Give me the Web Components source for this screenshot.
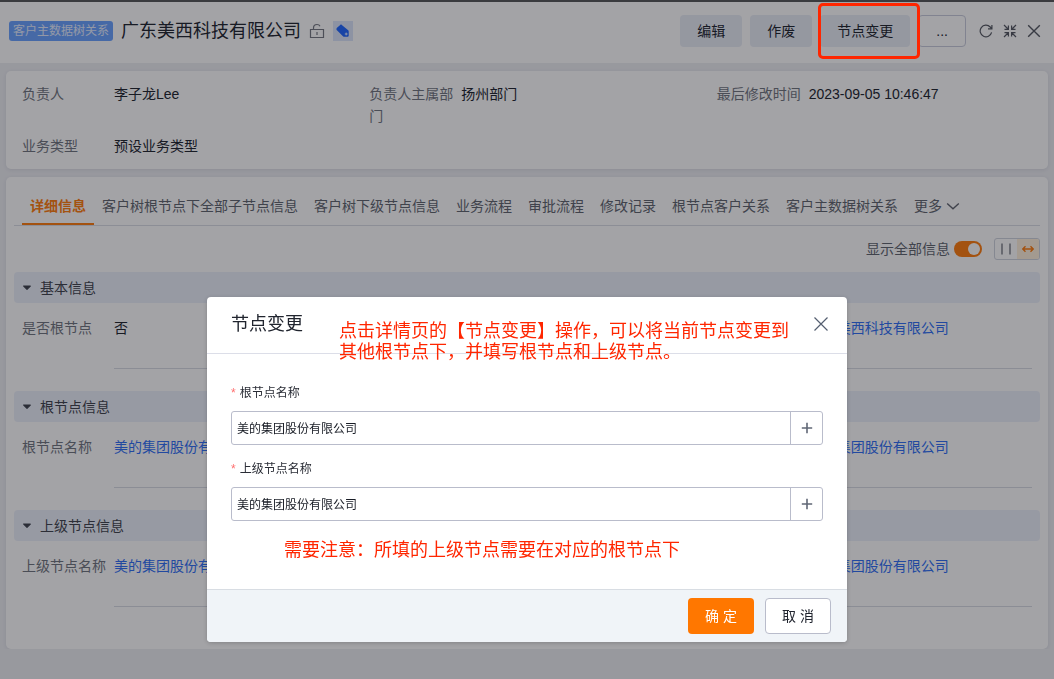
<!DOCTYPE html>
<html lang="zh-CN">
<head>
<meta charset="utf-8">
<meta name="viewport" content="width=device-width, initial-scale=1">
<title>广东美西科技有限公司</title>
<style>
  body {
    margin: 0;
    font: 14px/22px "Liberation Sans", "Noto Sans CJK SC", sans-serif;
    color: #20242e;
    background: #eeeff3;
  }
</style>
</head>
<body>
<crm-page></crm-page>

<script>
class CustomElement extends HTMLElement {
  constructor() {
    super()
    this.attachShadow({mode: 'open'})
  }

  attr(name) {
    return this.getAttribute(name) || ''
  }

  connectedCallback() {
    const template = document.createElement('template')
    template.innerHTML = `
      <style>
        *, :host { box-sizing: border-box; }
        button { font: inherit; color: inherit; border: 0; background: none; padding: 0; margin: 0; cursor: pointer; }
        a { color: #2f6ff5; text-decoration: none; }
        svg { display: block; }
        ${this.styles()}
      </style>
      ${this.render()}`
    this.shadowRoot.replaceChildren(template.content.cloneNode(true))
  }

  styles() {
    return ':host { display: block; }'
  }
}


const icons = {
  unlock: {size: 16, body: '<path d="M1.500 6.500h13v8h-13zM4.500 6.500V5C4.500 3 6 1.500 8 1.500c1.400 0 2.500.7 3 1.800M8 9v3"/>'},
  refresh: {size: 14, body: '<path d="M12.600 8.400A5.800 5.800 0 1 1 11.200 3l1.600 1.700M12.900 1v3.900H9"/>'},
  compress: {size: 14, body: '<path d="M1 1l4 4M5.400 1.500v3.900H1.500M13 1L9 5M8.600 1.500v3.900h3.900M1 13l4-4M5.400 12.500V8.600H1.500M13 13L9 9M8.600 12.500V8.600h3.900"/>'},
  close: {size: 14, body: '<path d="M1.200 1.200l11.600 11.600M12.800 1.200L1.200 12.800" stroke-width="1.400"/>'},
  dismiss: {size: 14, body: '<path d="M.5.5l13 13M13.500.5l-13 13"/>'},
  chevron: {size: 14, body: '<path d="M1.200 4.500L7 9.800l5.800-5.300" stroke-width="1.400"/>'},
  plus: {size: 12, body: '<path d="M6 .8v10.400M.8 6h10.400" stroke-width="1.600"/>'},
  bars: {size: 12, body: '<path d="M2 .5v11M10 .5v11"/>'},
  arrows: {size: 12, body: '<path d="M1 6h10M3.500 3.300L.8 6l2.700 2.700M8.500 3.300L11.200 6 8.500 8.700" stroke-width="1.400"/>'},
  caret: {size: 10, body: '<path d="M1.700 3h6.600L5 6.300z" fill="currentColor" stroke-linejoin="round"/>'},
  tag: {size: 14, body: '<path d="M1 3.700L4.200.9c.5-.4 1.100-.4 1.600 0l6.400 5.300c.3.300.5.600.5 1v4.300c0 .8-.5 1.300-1.300 1.300H8.200c-.4 0-.7-.1-1-.4L1.200 6.600C.3 5.700.1 4.600 1 3.700z" fill="currentColor" stroke="none"/><path d="M10.200 8.600v2.800M8.800 10h2.800" stroke="#dfeaff" stroke-width="1"/>'}
}


class CrmIcon extends CustomElement {
  styles() {
    return ':host { display: block; flex: none; }'
  }

  render() {
    const icon = icons[this.attr('name')]
    return `<svg width="${icon.size}" height="${icon.size}" viewBox="0 0 ${icon.size} ${icon.size}"
      fill="none" stroke="currentColor" stroke-width="1.200" aria-hidden="true">${icon.body}</svg>`
  }
}


class CrmButton extends CustomElement {
  styles() {
    return `
      :host { display: block; }
      button {
        display: block; height: 32px; min-width: 62px; padding: 0 17px;
        border-radius: 4px; background: #e9edf6; white-space: nowrap;
      }
      :host([kind="outline"]) button {
        min-width: 47px; background: #fff; border: 1px solid #c9ccdb;
      }
      :host([kind="primary"]) button, :host([kind="plain"]) button {
        height: 36px; min-width: 66px; padding: 0 16px;
      }
      :host([kind="primary"]) button { color: #fff; background: #ff7700; }
      :host([kind="plain"]) button { background: #fff; border: 1px solid #b9bccb; }
    `
  }

  render() {
    return '<button type="button"><slot></slot></button>'
  }
}


class CrmHeader extends CustomElement {
  styles() {
    return `
      :host {
        display: flex; align-items: center; justify-content: space-between;
        height: 63px; padding: 0 13px 4px 9px;
        background: #fff; border-top: 2px solid #56575a;
      }
      .title, .actions, .tools { display: flex; align-items: center; }
      .title, .actions { gap: 8px; }
      .badge {
        padding: 0 4px; border-radius: 3px;
        font-size: 12px; line-height: 20px; color: #e6eeff; background: #6aa2ff;
      }
      h1 { margin: 0; font-size: 18px; line-height: 24px; font-weight: 400; }
      .lock { color: #757882; }
      .tag {
        display: flex; align-items: center; justify-content: center;
        width: 20px; height: 20px; color: #1f66ff; background: #dbe6fa;
      }
      .tools { gap: 10px; padding-left: 5px; color: #545861; }
    `
  }

  render() {
    return `
      <div class="title">
        <span class="badge">客户主数据树关系</span>
        <h1>广东美西科技有限公司</h1>
        <button class="lock" type="button" aria-label="锁定"><crm-icon name="unlock"></crm-icon></button>
        <button class="tag" type="button" aria-label="标签"><crm-icon name="tag"></crm-icon></button>
      </div>
      <div class="actions">
        <crm-button>编辑</crm-button>
        <crm-button>作废</crm-button>
        <crm-button>节点变更</crm-button>
        <crm-button kind="outline">...</crm-button>
        <div class="tools">
          <button type="button" aria-label="刷新"><crm-icon name="refresh"></crm-icon></button>
          <button type="button" aria-label="收起"><crm-icon name="compress"></crm-icon></button>
          <button type="button" aria-label="关闭"><crm-icon name="close"></crm-icon></button>
        </div>
      </div>`
  }
}


class CrmCard extends CustomElement {
  styles() {
    return `
      :host {
        display: block; margin: 8px 6px 0; border-radius: 5px;
        background: #fff; box-shadow: 0 1px 4px rgba(40, 50, 80, .1);
      }`
  }

  render() {
    return '<slot></slot>'
  }
}


class CrmField extends CustomElement {
  styles() {
    return `
      :host { display: flex; gap: 8px; }
      .label { flex: none; width: 84px; color: #70747e; }
      .value { flex: 1; }
      :host([lined]) .value { min-height: 52px; border-bottom: 1px solid #d8dbe4; }
    `
  }

  render() {
    return `
      <div class="label">${this.attr('label')}</div>
      <div class="value"><slot></slot></div>`
  }
}


class CrmSummary extends CustomElement {
  styles() {
    return `
      :host {
        display: grid; grid-template-columns: repeat(3, 1fr);
        row-gap: 8px; padding: 12px 0;
      }
      crm-field { padding: 0 16px; }
    `
  }

  render() {
    return `
      <crm-field label="负责人">李子龙Lee</crm-field>
      <crm-field label="负责人主属部门">扬州部门</crm-field>
      <crm-field label="最后修改时间">2023-09-05 10:46:47</crm-field>
      <crm-field label="业务类型">预设业务类型</crm-field>`
  }
}


class CrmTabs extends CustomElement {
  styles() {
    return `
      :host { display: block; }
      nav {
        display: flex; height: 49px; padding: 0 8px;
        border-bottom: 1px solid #dadde6;
      }
      button {
        display: flex; align-items: center; gap: 4px;
        padding: 11px 8px 0; white-space: nowrap; color: #60646e;
        border-bottom: 2px solid transparent;
      }
      button.active { font-weight: 700; color: #ff7d0d; border-color: #ff7d0d; }
    `
  }

  render() {
    const tabs = ['详细信息', '客户树根节点下全部子节点信息', '客户树下级节点信息', '业务流程',
      '审批流程', '修改记录', '根节点客户关系', '客户主数据树关系']
    return `
      <nav>
        ${tabs.map((tab, i) => `<button type="button" class="${i ? '' : 'active'}">${tab}</button>`).join('')}
        <button type="button">更多<crm-icon name="chevron"></crm-icon></button>
      </nav>`
  }
}


class CrmToolbar extends CustomElement {
  styles() {
    return `
      :host {
        display: flex; justify-content: flex-end; align-items: center;
        gap: 12px; height: 46px; color: #60646e;
      }
      label { display: flex; align-items: center; gap: 4px; }
      input {
        appearance: none; position: relative; width: 28px; height: 16px; margin: 0;
        border-radius: 8px; background: #ff7d0d;
      }
      input::before {
        content: ""; position: absolute; top: 2px; right: 2px;
        width: 12px; height: 12px; border-radius: 50%; background: #fff;
      }
      .layout {
        display: flex; width: 46px; height: 22px; overflow: hidden;
        border: 1px solid #cfd3dd; border-radius: 3px;
      }
      .layout button { flex: 1; display: flex; align-items: center; justify-content: center; }
      .layout .on { color: #ff7d0d; background: #fff1dc; }
    `
  }

  render() {
    return `
      <label for="all">显示全部信息<input id="all" type="checkbox" role="switch" checked></label>
      <div class="layout">
        <button type="button" aria-label="双列"><crm-icon name="bars"></crm-icon></button>
        <button type="button" class="on" aria-label="通栏"><crm-icon name="arrows"></crm-icon></button>
      </div>`
  }
}


class CrmSection extends CustomElement {
  styles() {
    return `
      :host { display: block; margin-bottom: 22px; }
      button {
        display: flex; align-items: center; gap: 8px;
        width: 100%; height: 31px; padding: 0 8px;
        border-radius: 4px; color: #3f434d; background: #ecf1fb;
      }
      /* bleed back to the card edge so columns line up with the summary */
      .grid {
        display: grid; grid-template-columns: repeat(3, 1fr);
        margin: 0 -8px; padding-top: 14px;
      }
      ::slotted(*) { padding: 0 16px; }
      ::slotted(:last-child) { grid-column: 3; }
    `
  }

  render() {
    return `
      <button type="button" aria-expanded="true"><crm-icon name="caret"></crm-icon>${this.attr('heading')}</button>
      <div class="grid"><slot></slot></div>`
  }
}


class CrmDetail extends CustomElement {
  styles() {
    return ':host { display: block; padding: 0 8px 20px; }'
  }

  render() {
    return `
      <crm-tabs></crm-tabs>
      <crm-toolbar></crm-toolbar>
      <crm-section heading="基本信息">
        <crm-field lined label="是否根节点">否</crm-field>
        <crm-field lined><a href="#">广东美西科技有限公司</a></crm-field>
      </crm-section>
      <crm-section heading="根节点信息">
        <crm-field lined label="根节点名称"><a href="#">美的集团股份有限公司</a></crm-field>
        <crm-field lined><a href="#">美的集团股份有限公司</a></crm-field>
      </crm-section>
      <crm-section heading="上级节点信息">
        <crm-field lined label="上级节点名称"><a href="#">美的集团股份有限公司</a></crm-field>
        <crm-field lined><a href="#">美的集团股份有限公司</a></crm-field>
      </crm-section>`
  }
}


class CrmLookup extends CustomElement {
  styles() {
    return `
      :host { display: flex; flex-direction: column; gap: 8px; font-size: 12px; }
      label { display: flex; gap: 4px; line-height: 20px; color: #2a2d36; }
      i { color: #ff7070; font-style: normal; }
      .box {
        display: flex; height: 34px; background: #fff;
        border: 1px solid #b9bccb; border-radius: 3px;
      }
      input {
        flex: 1; min-width: 0; padding: 1px 5px 0; border: 0; outline: 0;
        font: inherit; color: #181c25; background: none;
      }
      button {
        display: flex; align-items: center; justify-content: center;
        width: 32px; color: #606776; border-left: 1px solid #b9bccb;
      }
    `
  }

  render() {
    return `
      <label for="value"><i>*</i>${this.attr('label')}</label>
      <div class="box">
        <input id="value" type="text" value="${this.attr('value')}">
        <button type="button" aria-label="选择"><crm-icon name="plus"></crm-icon></button>
      </div>`
  }
}


class CrmNote extends CustomElement {
  styles() {
    return `
      :host {
        display: block; position: absolute;
        font-size: 18px; line-height: 21px; color: #ff2600; white-space: nowrap;
      }`
  }

  render() {
    return '<slot></slot>'
  }
}


class CrmDialog extends CustomElement {
  styles() {
    return `
      :host {
        display: block; position: relative; width: 640px; max-width: 100%;
        border-radius: 4px; background: #fff; box-shadow: 0 1px 4px rgba(0, 0, 0, .2);
      }
      header {
        display: flex; align-items: center; justify-content: space-between;
        height: 57px; padding: 0 19px 2px 24px; border-bottom: 1px solid #dcdee8;
      }
      h2 { margin: 0; font-size: 18px; line-height: 24px; font-weight: 400; }
      header button { color: #545e70; }
      .body { display: flex; flex-direction: column; gap: 14px; padding: 29px 24px 68px; }
      footer {
        display: flex; justify-content: flex-end; gap: 11px; padding: 8px 16px;
        border-top: 1px solid #d8dde3; border-radius: 0 0 4px 4px; background: #f0f4f8;
      }
      .usage { top: 24px; left: 132px; }
      .caution { bottom: 81px; left: 77px; }
    `
  }

  render() {
    return `
      <section role="dialog" aria-labelledby="title">
        <header>
          <h2 id="title">节点变更</h2>
          <button type="button" aria-label="关闭"><crm-icon name="dismiss"></crm-icon></button>
        </header>
        <div class="body">
          <crm-lookup label="根节点名称" value="美的集团股份有限公司"></crm-lookup>
          <crm-lookup label="上级节点名称" value="美的集团股份有限公司"></crm-lookup>
        </div>
        <footer>
          <crm-button kind="primary">确 定</crm-button>
          <crm-button kind="plain">取 消</crm-button>
        </footer>
      </section>
      <crm-note class="usage">点击详情页的【节点变更】操作，可以将当前节点变更到<br>其他根节点下，并填写根节点和上级节点。</crm-note>
      <crm-note class="caution">需要注意：所填的上级节点需要在对应的根节点下</crm-note>`
  }
}


class CrmPage extends CustomElement {
  styles() {
    return `
      :host { display: block; }
      .mask {
        position: fixed; inset: 0; display: flex; justify-content: center; align-items: flex-start;
        padding-top: 297px; background: rgba(12, 14, 20, .38);
      }
      /* marks the node change button above the mask */
      .marker {
        position: fixed; top: 3px; right: 134px; width: 102px; height: 56px;
        border: 3px solid #ff2600; border-radius: 5px; pointer-events: none;
      }
    `
  }

  render() {
    return `
      <crm-header></crm-header>
      <crm-card><crm-summary></crm-summary></crm-card>
      <crm-card><crm-detail></crm-detail></crm-card>
      <div class="mask"><crm-dialog></crm-dialog></div>
      <div class="marker"></div>`
  }
}


customElements.define('crm-icon', CrmIcon)
customElements.define('crm-button', CrmButton)
customElements.define('crm-header', CrmHeader)
customElements.define('crm-card', CrmCard)
customElements.define('crm-field', CrmField)
customElements.define('crm-summary', CrmSummary)
customElements.define('crm-tabs', CrmTabs)
customElements.define('crm-toolbar', CrmToolbar)
customElements.define('crm-section', CrmSection)
customElements.define('crm-detail', CrmDetail)
customElements.define('crm-lookup', CrmLookup)
customElements.define('crm-note', CrmNote)
customElements.define('crm-dialog', CrmDialog)
customElements.define('crm-page', CrmPage)
</script>
</body>
</html>
